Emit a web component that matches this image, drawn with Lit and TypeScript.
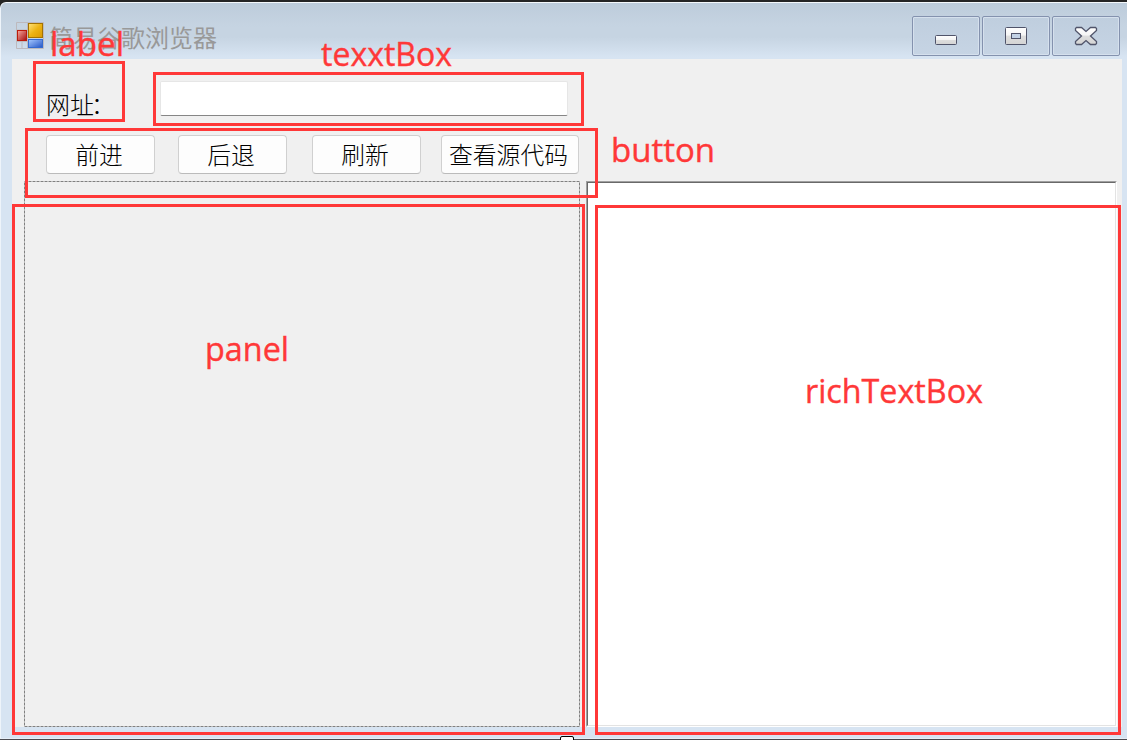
import { LitElement, html, css, svg } from "lit";
import { customElement, property } from "lit/decorators.js";

@customElement("caption-button")
class CaptionButton extends LitElement {
  @property() kind = "min";
  static styles = css`
    :host { display: block; box-sizing: border-box; width: 68px; height: 40px; border: 1px solid #8492ae; border-radius: 2px; box-shadow: inset 0 0 0 1px #d5e0ed; background: linear-gradient(#bfcede, #c6d4e4); }
    svg { display: block; width: 66px; height: 38px; }
  `;
  render() {
    const glyphs: Record<string, unknown> = {
      min: svg`<rect x="22.5" y="18.5" width="21" height="9" rx="1" fill="url(#g)" stroke="#50546a"/>`,
      max: svg`<path fill-rule="evenodd" d="M23.5 10.5h19q1 0 1 1v15q0 1-1 1h-19q-1 0-1-1v-15q0-1 1-1z" fill="url(#g)" stroke="#50546a"/><rect x="28.5" y="16.5" width="9" height="5" fill="#c3d2e5" stroke="#50546a"/>`,
      close: svg`<path d="M23.5 10.5h5l4.500 4 4.500-4h5l1 1v2l-6 5.500 6 5.500v2l-1 1h-5l-4.500-4-4.500 4h-5l-1-1v-2l6-5.500-6-5.500v-2z" fill="url(#g)" stroke="#50546a" stroke-width="1.300"/>`,
    };
    return html`<svg viewBox="0 0 66 38"><defs><linearGradient id="g" x2="0" y2="1"><stop offset="0" stop-color="#fff"/><stop offset=".45" stop-color="#f5f5f5"/><stop offset=".5" stop-color="#dedede"/><stop offset="1" stop-color="#d4d4d4"/></linearGradient></defs>${glyphs[this.kind]}</svg>`;
  }
}

@customElement("app-root")
class AppRoot extends LitElement {
  static styles = css`
    :host { display: block; position: relative; width: 1127px; height: 740px; overflow: hidden; background: #252525; font-family: "Noto Sans CJK SC", sans-serif; }
    * { box-sizing: border-box; }
    .window { height: 740px; padding-top: 2px; border-bottom: 1px solid #4b4b50; }
    .frame { height: 737px; border-top: 1px solid #f4f8fb; border-left: 1px solid #eef4fa; border-bottom: 1px solid #e6eef7; border-top-left-radius: 6px; background: linear-gradient(#bdccdb 0, #c6d4e2 24px, #c6d4e2 34px, #d7e4f2 54px); padding: 0 5px 11px 11px; }
    .title { height: 56px; display: flex; align-items: flex-start; }
    .logo { width: 28px; height: 28px; margin: 19px 0 0 4px; flex: none; }
    .name { margin: 16px auto 0 5px; font-size: 24px; line-height: 36px; color: #999; white-space: nowrap; }
    .caption { display: flex; gap: 2px; margin: 13px 2px 0 0; }
    .client { height: 668px; background: #f0f0f0; }
    .address { display: flex; height: 76px; padding: 22px 0 0 34px; }
    .address label { width: 114px; font-size: 24px; line-height: 30px; padding-top: 8px; font-weight: 300; color: #000; white-space: nowrap; }
    .colon { margin-left: -3px; }
    .address input { width: 408px; height: 35px; padding: 0; outline: 0; border: 1px solid #e6e6e6; border-bottom-color: #868686; border-radius: 2px; background: #fff; }
    .buttons { display: flex; height: 46px; padding-left: 34px; }
    button { width: 109px; height: 39px; padding: 0 3px 4px 0; margin: 0 23px 0 0; border: 1px solid #d0d0d0; border-bottom-color: #bbb; border-radius: 4px; background: #fdfdfd; font: 300 23.800px "Noto Sans CJK SC", sans-serif; color: #000; white-space: nowrap; }
    button:nth-child(2) { margin-right: 25px; }
    button:nth-child(3) { margin-right: 20px; }
    button.wide { width: 138px; margin: 0; }
    .panes { display: flex; gap: 6px; height: 546px; padding-left: 12px; }
    .panel { width: 556px; flex: none; }
    .panel svg { display: block; width: 556px; height: 546px; }
    .rich { width: 531px; background: #fff; border: 1px solid #a0a0a0; border-right-color: #fff; border-bottom-color: #fff; }
    .inner { height: 100%; border: 1px solid #696969; border-right-color: #e3e3e3; border-bottom-color: #e3e3e3; }
    .notes { position: absolute; left: 0; top: 0; pointer-events: none; }
    .notes rect { fill: none; stroke: #ff3838; stroke-width: 3px; }
    .notes text { fill: #ff3838; stroke: #ff3838; stroke-width: 0.4px; font-family: "Open Sans", sans-serif; font-size: 33px; }
    .grip { position: absolute; left: 560px; top: 736px; width: 14px; height: 8px; border: 1px solid #000; border-radius: 2px; background: #fff; }
  `;
  render() {
    const boxes = [[33, 61, 125, 122], [153, 72, 584, 126], [25, 128, 598, 198], [12, 204, 585, 735], [595, 205, 1121, 735]];
    const notes: [string, number, number, number][] = [["label", 50, 56, 74], ["texxtBox", 321, 66, 131], ["button", 611, 162, 104], ["panel", 205, 361, 84], ["richTextBox", 805, 403, 178]];
    return html`
      <div class="window"><div class="frame">
        <header class="title">
          <svg class="logo" viewBox="0 0 28 28">
            <defs>
              <linearGradient id="r" x2="1" y2="1"><stop stop-color="#f6aaa0"/><stop offset="1" stop-color="#a50d0d"/></linearGradient>
              <linearGradient id="y" x2="1" y2="1"><stop stop-color="#ffe27a"/><stop offset=".5" stop-color="#edb313"/><stop offset="1" stop-color="#d99800"/></linearGradient>
              <linearGradient id="b" x2="1" y2="1"><stop stop-color="#a6c8ff"/><stop offset="1" stop-color="#2455c5"/></linearGradient>
            </defs>
            <path d="M.5.5h27v26H.5zM11.500.5v26M.5 8h11M.5 19.500h11M6 19.500v7" fill="none" stroke="#bdb9bd"/>
            <rect x="1.500" y="8.500" width="9" height="10" fill="url(#r)" stroke="#bc1b0b"/>
            <rect x="12.500" y="1.500" width="14" height="14" fill="url(#y)" stroke="#a47300"/>
            <rect x="12.500" y="17.500" width="14" height="8" fill="url(#b)" stroke="#346bd0"/>
          </svg>
          <div class="name">简易谷歌浏览器</div>
          <div class="caption"><caption-button kind="min"></caption-button><caption-button kind="max"></caption-button><caption-button kind="close"></caption-button></div>
        </header>
        <main class="client">
          <div class="address"><label>网址<span class="colon">：</span></label><input type="text" /></div>
          <div class="buttons"><button>前进</button><button>后退</button><button>刷新</button><button class="wide">查看源代码</button></div>
          <div class="panes">
            <div class="panel"><svg><rect x=".5" y=".5" width="555" height="545" fill="none" stroke="#808080" stroke-dasharray="3 1"/></svg></div>
            <div class="rich"><div class="inner"></div></div>
          </div>
        </main>
      </div></div>
      <div class="grip"></div>
      <svg class="notes" width="1127" height="740">
        ${boxes.map(([a, b, c, d]) => svg`<rect x=${a + 1.5} y=${b + 1.5} width=${c - a - 3} height=${d - b - 3} />`)}
        ${notes.map(([t, x, y, w]) => svg`<text x=${x} y=${y} textLength=${w} lengthAdjust="spacingAndGlyphs">${t}</text>`)}
      </svg>`;
  }
}
